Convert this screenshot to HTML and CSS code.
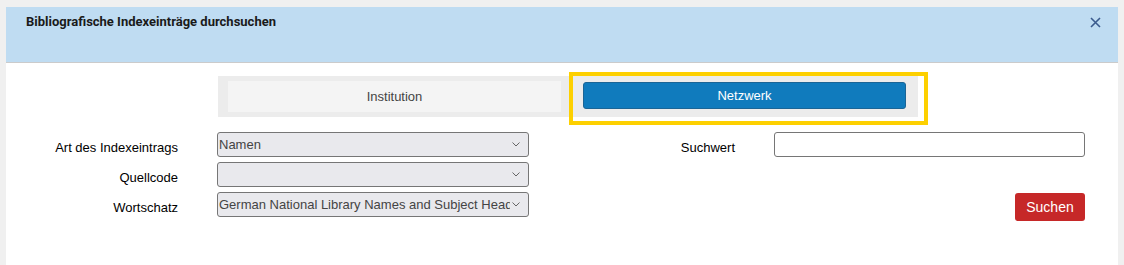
FILE: index.html
```html
<!DOCTYPE html>
<html lang="de">
<head>
<meta charset="UTF-8">
<meta name="viewport" content="width=device-width, initial-scale=1.0">
<title>Bibliografische Indexeinträge durchsuchen</title>
<link rel="stylesheet" href="styles.css">
</head>
<body>

<div class="dialog">
  <div class="dialog-header">
    <h1>Bibliografische Indexeinträge durchsuchen</h1>
    <button class="close" title="Schließen">
      <svg width="11" height="11" viewBox="0 0 11 11">
        <path d="M1 1 L10 10 M10 1 L1 10" stroke="#3b5b8e" stroke-width="1.6" fill="none"/>
      </svg>
    </button>
  </div>

  <div class="tabs">
    <div class="tab">Institution</div>
    <div class="tab active">Netzwerk</div>
  </div>

  <!-- highlight marker around the active tab -->
  <div class="highlight"></div>

  <form class="search-form">
    <label for="art">Art des Indexeintrags</label>
    <select id="art">
      <option>Namen</option>
    </select>
    <label for="wert">Suchwert</label>
    <input type="text" id="wert">

    <label for="quelle">Quellcode</label>
    <select id="quelle">
      <option></option>
    </select>
    <span></span>
    <span></span>

    <label for="wortschatz">Wortschatz</label>
    <select id="wortschatz">
      <option>German National Library Names and Subject Headings</option>
    </select>
    <span></span>
    <button type="button" class="btn-search">Suchen</button>
  </form>
</div>

</body>
</html>
```

FILE: styles.css
```css
body {
  margin: 0;
  background: #f0f0f0;
  font-family: "Liberation Sans", Arial, sans-serif;
  font-size: 13px;
  color: #000;
  overflow: hidden;
}

.dialog {
  position: relative;
  margin: 7px 0 0 6px;
  width: 1112px;
  height: calc(100vh - 7px);
  background: #fff;
}

.dialog-header {
  display: flex;
  justify-content: space-between;
  align-items: flex-start;
  height: 55px;
  padding: 0 17px 0 20px;
  background: #bfdcf2;
  border-bottom: 1px solid #cbcbcb;
}

.dialog-header h1 {
  margin: 7px 0 0 0;
  font-family: Roboto, "Liberation Sans", sans-serif;
  font-size: 13px;
  line-height: 16px;
  font-weight: bold;
  color: #1a1a1a;
}

.close {
  margin-top: 10px;
  padding: 0;
  border: none;
  background: none;
  line-height: 0;
  cursor: pointer;
}

.tabs {
  display: flex;
  align-items: flex-start;
  width: 678px;
  margin: 13px 0 0 212px;
  padding: 5px 12px 5px 10px;
  background: #ececec;
}

.tab {
  width: 333px;
  height: 31px;
  line-height: 31px;
  text-align: center;
  background: #f4f4f4;
  color: #444;
}

.tab.active {
  width: 321px;
  height: 25px;
  line-height: 25px;
  margin: 1px 0 0 22px;
  background: #107bbd;
  border: 1px solid #1b6596;
  border-radius: 3px;
  color: #fff;
}

.highlight {
  position: absolute;
  left: 563px;
  top: 65px;
  width: 359px;
  height: 53px;
  box-sizing: border-box;
  border: 4px solid #fdd000;
}

.search-form {
  display: grid;
  grid-template-columns: 172px 312px 167px 311px;
  grid-auto-rows: 25px;
  column-gap: 39px;
  row-gap: 5px;
  align-items: center;
  margin-top: 15px;
}

.search-form label {
  padding-top: 6px;
  text-align: right;
}

.search-form select {
  appearance: none;
  height: 25px;
  margin: 0;
  padding: 0 18px 0 1px;
  font-family: "Liberation Sans", Arial, sans-serif;
  font-size: 13px;
  color: #444;
  background: #e9e9ed url("data:image/svg+xml;utf8,<svg xmlns='http://www.w3.org/2000/svg' width='8' height='5' viewBox='0 0 8 5'><path d='M0.5 0.5 L4 4 L7.5 0.5' stroke='%23666' stroke-width='1' fill='none'/></svg>") no-repeat right 8px center;
  border: 1px solid #767676;
  border-radius: 3px;
  text-overflow: clip;
  white-space: nowrap;
  overflow: hidden;
}

.search-form input {
  height: 25px;
  margin: 0;
  padding: 0 4px;
  box-sizing: border-box;
  border: 1px solid #767676;
  border-radius: 3px;
  font-family: "Liberation Sans", Arial, sans-serif;
  font-size: 13px;
}

.btn-search {
  justify-self: end;
  align-self: start;
  width: 70px;
  height: 28px;
  margin-top: 1px;
  padding: 0;
  border: none;
  border-radius: 3px;
  background: #c62828;
  color: #fff;
  font-family: "Liberation Sans", Arial, sans-serif;
  font-size: 14px;
  cursor: pointer;
}
```
